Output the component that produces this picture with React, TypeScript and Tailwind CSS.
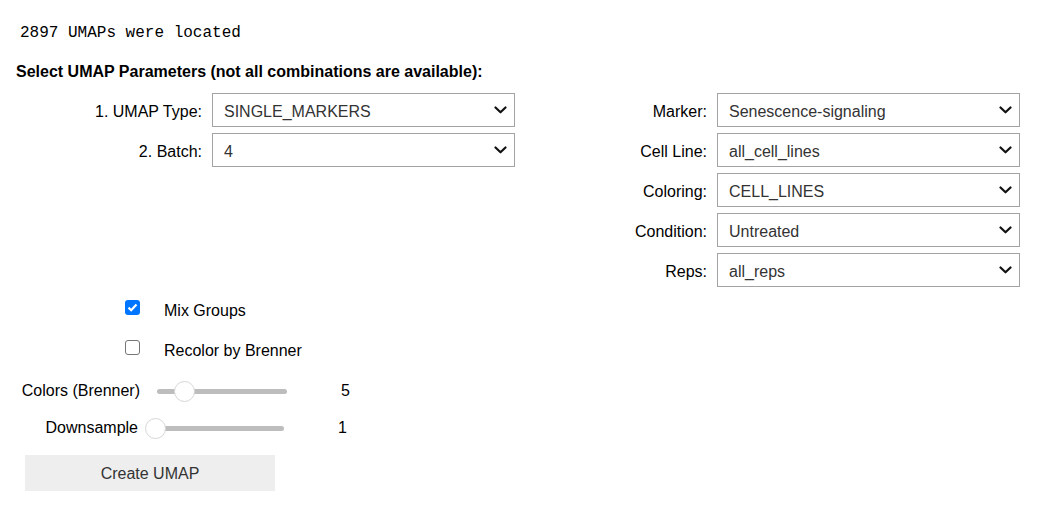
import React from 'react'

const sans = "font-['Liberation_Sans',Arial,sans-serif]"

function Chevron() {
  return (
    <svg width="13" height="8" viewBox="0 0 13 8" className="shrink-0">
      <path d="M1.5 1.5 L6.5 6.3 L11.5 1.5" fill="none" stroke="#111" strokeWidth="2.2" strokeLinecap="round" strokeLinejoin="round" />
    </svg>
  )
}

function SelectRow({ label, value }: { label: string; value: string }) {
  return (
    <div className="flex items-center h-[34px]">
      <div className="w-[187px] text-right text-black pr-[1px] pt-[4px]">{label}</div>
      <div className="ml-[9px] w-[303px] h-[34px] border border-[#a3a3a3] bg-white flex items-center justify-between pl-[11px] pr-[7px] text-[#333]">
        <span className="pt-[4px]">{value}</span>
        <Chevron />
      </div>
    </div>
  )
}

function Check({ checked, label }: { checked: boolean; label: string }) {
  return (
    <div className="flex items-center h-[40px]">
      {checked ? (
        <div className="ml-[109px] w-[15px] h-[15px] rounded-[3px] bg-[#0075ff] flex items-center justify-center mt-[-4px]">
          <svg width="11" height="9" viewBox="0 0 11 9">
            <path d="M1.5 4.6 L4.2 7.2 L9.5 1.6" fill="none" stroke="#fff" strokeWidth="2.2" />
          </svg>
        </div>
      ) : (
        <div className="ml-[109px] w-[15px] h-[15px] rounded-[3px] border border-[#767676] bg-white mt-[-4px]" />
      )}
      <span className="ml-[24px] text-black pt-[4px]">{label}</span>
    </div>
  )
}

function Slider({
  label,
  labelW,
  trackW,
  pos,
  value,
  valueGap,
}: {
  label: string
  labelW: string
  trackW: string
  pos: number
  value: string
  valueGap: string
}) {
  return (
    <div className="flex items-center h-[32px]">
      <div className={`${labelW} text-right text-black`}>{label}</div>
      <div className="px-[10px] ml-[7px]">
        <div className={`relative ${trackW} h-[5px] rounded-full bg-[#bdbdbd]`}>
          <div
            className="absolute top-[-8px] w-[21px] h-[21px] rounded-full bg-white border border-[#d6d6d6]"
            style={{ left: pos - 10 }}
          />
        </div>
      </div>
      <div className={`${valueGap} text-black`}>{value}</div>
    </div>
  )
}

export default function App() {
  return (
    <div className={`${sans} text-[16px] bg-white w-[1042px] h-[512px] pl-[16px] pt-[24px]`}>
      <div className="pl-[4px] h-[19px] leading-[19px] font-['Liberation_Mono',monospace] text-black">
        2897 UMAPs were located
      </div>

      <div className="mt-[20px] h-[18px] leading-[18px] text-[16px] font-bold text-black">
        Select UMAP Parameters (not all combinations are available):
      </div>

      <div className="mt-[12px] flex gap-[6px]">
        <div className="flex flex-col gap-[6px]">
          <SelectRow label="1. UMAP Type:" value="SINGLE_MARKERS" />
          <SelectRow label="2. Batch:" value="4" />
        </div>
        <div className="flex flex-col gap-[6px]">
          <SelectRow label="Marker:" value="Senescence-signaling" />
          <SelectRow label="Cell Line:" value="all_cell_lines" />
          <SelectRow label="Coloring:" value="CELL_LINES" />
          <SelectRow label="Condition:" value="Untreated" />
          <SelectRow label="Reps:" value="all_reps" />
        </div>
      </div>

      <div className="mt-[2px]">
        <Check checked label="Mix Groups" />
        <Check checked={false} label="Recolor by Brenner" />
      </div>

      <div className="mt-[6px]">
        <Slider label="Colors (Brenner)" labelW="w-[124px]" trackW="w-[130px]" pos={27} value="5" valueGap="ml-[44px]" />
        <div className="mt-[5px]">
          <Slider label="Downsample" labelW="w-[122px]" trackW="w-[129px]" pos={0} value="1" valueGap="ml-[44px]" />
        </div>
      </div>

      <button className="mt-[11px] ml-[9px] w-[250px] h-[36px] pt-[2px] bg-[#eeeeee] text-[#333] text-[16px]">
        Create UMAP
      </button>
    </div>
  )
}
